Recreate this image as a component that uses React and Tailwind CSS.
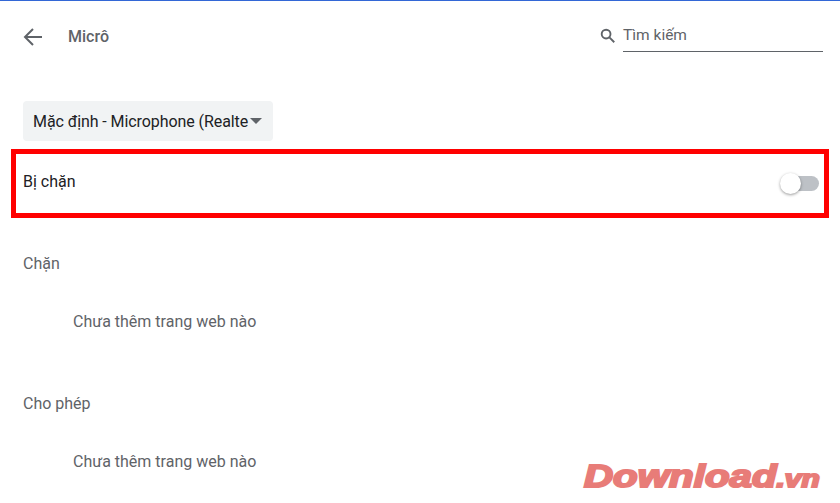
export default function App() {
  return (
    <div className="relative h-[503px] w-[840px] overflow-hidden bg-white font-['Roboto',sans-serif] text-[16px] text-[#5f6368]">
      <div className="h-px bg-[#3367d6]" />

      {/* header */}
      <div className="flex h-[71px] items-center pl-[23px] pr-[17px]">
        <svg width="20" height="20" viewBox="0 0 20 20" fill="none" stroke="#5f6368" strokeWidth="2">
          <path d="M19 10H3" />
          <path d="M10 2l-8 8 8 8" />
        </svg>
        <span className="ml-[25px] font-medium">Micrô</span>
        <div className="ml-auto flex items-start">
          <svg width="15" height="15" viewBox="0 0 16 16" fill="none" stroke="#5f6368" strokeWidth="2" className="mt-[7px] mr-[8px]">
            <circle cx="6.5" cy="6.5" r="4.7" />
            <path d="M10 10l5.2 5.2" />
          </svg>
          <div className="h-[31px] w-[200px] border-b border-[#5f6368] pt-[3px] text-[15.5px] leading-[22px]">Tìm kiếm</div>
        </div>
      </div>

      <div className="px-[23px] pt-[29px]">
        <div className="flex h-10 w-[250px] items-center rounded bg-[#f1f3f4] pl-[10px] text-[#202124]">
          <span className="mt-[2px] w-[217px] shrink-0 overflow-hidden whitespace-nowrap tracking-[-0.08px]">Mặc định - Microphone (Realte</span>
          <span className="h-0 w-0 border-x-[6.5px] border-t-[6px] border-x-transparent border-t-[#5f6368]" />
        </div>
      </div>

      {/* highlighted row */}
      <div className="mt-2 ml-[11px] flex h-[69px] w-[818px] items-center justify-between border-[5px] border-[#ff0000] pb-[4px] pl-[7px] pr-[5px] text-[#202124]">
        <span>Bị chặn</span>
        <div className="relative mt-[4px] h-[15px] w-[34px] rounded-full bg-[#bdc1c6]">
          <div className="absolute -top-[3px] -left-[5px] h-[21px] w-[21px] rounded-full bg-white shadow-[0_1px_3px_rgba(0,0,0,0.4)]" />
        </div>
      </div>

      <div className="px-[23px]">
        <div className="mt-[35px] leading-[22px]">Chặn</div>
        <div className="mt-[36px] pl-[50px] leading-[22px]">Chưa thêm trang web nào</div>
        <div className="mt-[60px] leading-[22px]">Cho phép</div>
        <div className="mt-[36px] pl-[50px] leading-[22px]">Chưa thêm trang web nào</div>
      </div>

      {/* watermark */}
      <div className="absolute left-[584px] top-[454px] origin-left scale-x-[1.3] whitespace-nowrap font-['Liberation_Sans',sans-serif] font-bold italic text-[#e87c78] [-webkit-text-stroke:2px_#e87c78]">
        <span className="text-[31px]">Download</span>
        <span className="text-[23px]">.vn</span>
      </div>
    </div>
  );
}
